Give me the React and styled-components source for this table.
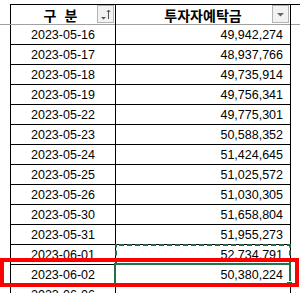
import React from 'react'
import styled, { createGlobalStyle } from 'styled-components'

const GlobalStyle = createGlobalStyle`
  body {
    margin: 0;
    background: #fff;
    font-family: "Liberation Sans", "Noto Sans CJK KR", sans-serif;
    color: #000;
  }
`

const Sheet = styled.div`
  position: relative;
  width: 300px;
  height: 293px;
  overflow: hidden;
  background: #fff;
`

const HeaderPane = styled.div`
  padding: 4px 0 0 10px;
  border-bottom: 1px solid #a0a0a0;
`

const HeaderRow = styled.div`
  display: grid;
  grid-template-columns: 105px 175px;
  height: 19px;
  border-top: 1px solid #000;
  border-left: 1px solid #000;
`

const HeaderCell = styled.div`
  position: relative;
  display: flex;
  align-items: center;
  justify-content: center;
  padding-right: ${p => p.$shift || 0}px;
  border-right: 1px solid #000;
  font-size: 14px;
  font-weight: bold;
  font-family: "Noto Sans CJK KR", sans-serif;
  word-spacing: 5px;
`

const FilterButton = styled.div`
  position: absolute;
  top: 0;
  right: 1px;
  width: 17px;
  height: 18px;
  box-sizing: border-box;
  border: 1px solid #b4b4b4;
  background: #f2f2f2;
  display: flex;
  align-items: center;
  justify-content: center;
`

const Body = styled.div`
  padding-left: 10px;
`

const Grid = styled.div`
  display: grid;
  grid-template-columns: 105px 175px;
  grid-auto-rows: 20px;
  width: 280px;
  border-left: 1px solid #000;
`

const Cell = styled.div`
  position: relative;
  box-sizing: border-box;
  display: flex;
  align-items: center;
  justify-content: ${p => (p.$num ? 'flex-end' : 'center')};
  padding-right: ${p => (p.$num ? 7 : 0)}px;
  border-right: 1px solid #000;
  border-bottom: 1px solid #000;
  font-size: 12.5px;
`

const Marquee = styled.div`
  position: absolute;
  top: -1px;
  left: -1px;
  right: -1px;
  bottom: -1px;
  background:
    linear-gradient(90deg, #1f6e43 65%, transparent 0) top / 8px 2px repeat-x,
    linear-gradient(90deg, #1f6e43 65%, transparent 0) bottom / 8px 2px repeat-x,
    linear-gradient(180deg, #1f6e43 65%, transparent 0) left / 2px 8px repeat-y,
    linear-gradient(180deg, #1f6e43 65%, transparent 0) right / 2px 8px repeat-y;
`

const Selection = styled.div`
  position: absolute;
  top: -2px;
  left: -2px;
  right: -1px;
  bottom: -1px;
  border: 2px solid #217346;
`

const FillHandle = styled.div`
  position: absolute;
  right: -4px;
  bottom: -5px;
  width: 5px;
  height: 5px;
  background: #217346;
  border: 1px solid #fff;
`

const Highlight = styled.div`
  position: absolute;
  left: 0;
  top: 258px;
  width: 299px;
  height: 29px;
  box-sizing: border-box;
  border: 4px solid #ff0000;
  z-index: 5;
`

const rows = [
  ['2023-05-16', '49,942,274'],
  ['2023-05-17', '48,937,766'],
  ['2023-05-18', '49,735,914'],
  ['2023-05-19', '49,756,341'],
  ['2023-05-22', '49,775,301'],
  ['2023-05-23', '50,588,352'],
  ['2023-05-24', '51,424,645'],
  ['2023-05-25', '51,025,572'],
  ['2023-05-26', '51,030,305'],
  ['2023-05-30', '51,658,804'],
  ['2023-05-31', '51,955,273'],
  ['2023-06-01', '52,734,791', 'copy'],
  ['2023-06-02', '50,380,224', 'active'],
  ['2023-06-06', ''],
]

const SortFilterIcon = () => (
  <svg width="15" height="16" viewBox="0 0 15 16">
    <path d="M3 11h5l-2.5 2.5z" fill="#555" />
    <path d="M10.5 4v9M8.8 6l1.7-2 1.7 2" stroke="#555" strokeWidth="1" fill="none" />
  </svg>
)

const FilterIcon = () => (
  <svg width="15" height="16" viewBox="0 0 15 16">
    <path d="M4 7h7l-3.5 3.5z" fill="#666" />
  </svg>
)

export default function App() {
  return (
    <Sheet>
      <GlobalStyle />
      <HeaderPane>
        <HeaderRow>
          <HeaderCell $shift={5}>
            구 분
            <FilterButton><SortFilterIcon /></FilterButton>
          </HeaderCell>
          <HeaderCell>
            투자자예탁금
            <FilterButton><FilterIcon /></FilterButton>
          </HeaderCell>
        </HeaderRow>
      </HeaderPane>
      <Body>
        <Grid>
          {rows.map(([date, amount, mark]) => (
            <React.Fragment key={date}>
              <Cell>{date}</Cell>
              <Cell $num>
                {amount}
                {mark === 'copy' && <Marquee />}
                {mark === 'active' && (
                  <Selection>
                    <FillHandle />
                  </Selection>
                )}
              </Cell>
            </React.Fragment>
          ))}
        </Grid>
      </Body>
      <Highlight />
    </Sheet>
  )
}
